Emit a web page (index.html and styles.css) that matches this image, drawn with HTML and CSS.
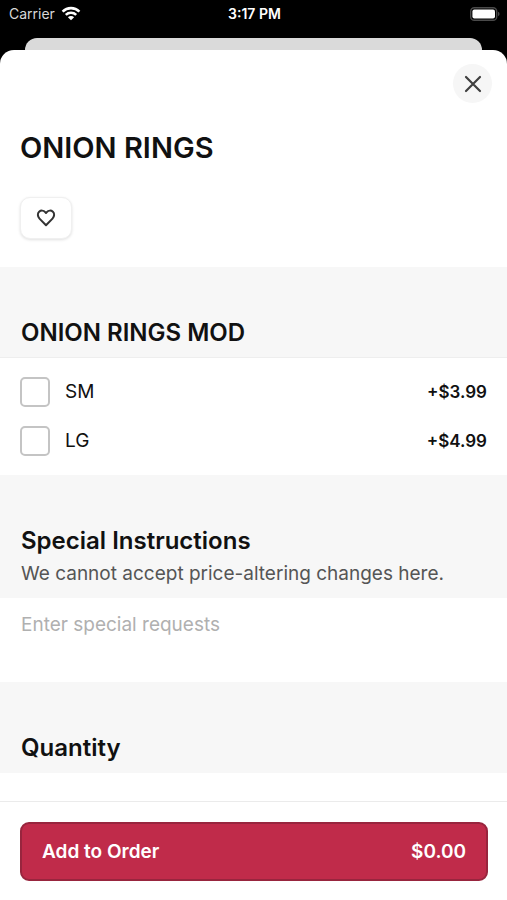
FILE: index.html
```html
<!DOCTYPE html>
<html lang="en">
<head>
<meta charset="utf-8">
<meta name="viewport" content="width=device-width, initial-scale=1">
<title>Onion Rings</title>
<link rel="stylesheet" href="styles.css">
</head>
<body>
<div class="status">
  <div class="carrier">
    <span>Carrier</span>
    <svg width="20" height="16" viewBox="0 0 20 16" fill="none" stroke="#fff" stroke-width="2.6" aria-hidden="true">
      <path d="M1.6 5.6a12 12 0 0 1 16.8 0"/>
      <path d="M4.8 8.9a7.5 7.5 0 0 1 10.4 0"/>
      <path d="M10 14.2 6.9 11.2a4.4 4.4 0 0 1 6.2 0Z" fill="#fff" stroke="none"/>
    </svg>
  </div>
  <time class="clock">3:17 PM</time>
  <svg class="battery" width="30" height="14" viewBox="0 0 30 14" aria-hidden="true">
    <rect x="0.7" y="0.7" width="26" height="12.6" rx="3.6" fill="none" stroke="#4a4a4a" stroke-width="1.4"/>
    <rect x="2.4" y="2.4" width="22.6" height="9.2" rx="2" fill="#fff"/>
    <path d="M28 4.8q1.6.6 1.6 2.2T28 9.2Z" fill="#4a4a4a"/>
  </svg>
</div>
<div class="back-card"></div>
<main class="sheet">
  <div class="toolbar">
    <button class="close" type="button" aria-label="Close">
      <svg width="18" height="18" viewBox="0 0 18 18" fill="none" stroke="#404040" stroke-width="2.2" stroke-linecap="round" aria-hidden="true"><path d="M2 2l14 14M16 2 2 16"/></svg>
    </button>
  </div>
  <header class="item">
    <h1>ONION RINGS</h1>
    <button class="favorite" type="button" aria-label="Add to favorites">
      <svg width="20" height="18" viewBox="0 0 20 18" fill="none" stroke="#333" stroke-width="2" stroke-linejoin="round" aria-hidden="true"><path d="M10 16.2 3.5 9.6C1.4 7.4 1.4 4.2 3.1 2.7 4.9 1.1 7.6 1.3 9.2 3.1L10 4l.8-.9c1.6-1.8 4.3-2 6.1-.4 1.700 1.500 1.700 4.700-.4 6.900Z"/></svg>
    </button>
  </header>
  <section>
    <div class="heading lined"><h2>ONION RINGS MOD</h2></div>
    <div class="options">
      <label class="option"><input type="checkbox" name="size" value="sm"><span>SM</span><span class="price">+$3.99</span></label>
      <label class="option"><input type="checkbox" name="size" value="lg"><span>LG</span><span class="price">+$4.99</span></label>
    </div>
  </section>
  <section>
    <div class="heading">
      <h2><label for="requests">Special Instructions</label></h2>
      <p>We cannot accept price-altering changes here.</p>
    </div>
    <textarea id="requests" placeholder="Enter special requests"></textarea>
  </section>
  <section>
    <div class="heading"><h2>Quantity</h2></div>
  </section>
</main>
<footer class="footer">
  <button class="add" type="button"><span>Add to Order</span><span>$0.00</span></button>
</footer>
</body>
</html>
```
FILE: styles.css
```css
* { box-sizing: border-box; }

body {
  margin: 0;
  min-height: 100vh;
  display: flex;
  flex-direction: column;
  background: #000;
  color: #111;
  font-family: Inter, "Liberation Sans", sans-serif;
}

h1, h2, p { margin: 0; }
h1, h2 { font-weight: 600; }
svg { display: block; }
button, input, textarea { font: inherit; }

.status {
  display: grid;
  grid-template-columns: 1fr auto 1fr;
  align-items: center;
  height: 38px;
  padding: 0 7px 11px 9px;
  color: #fff;
  font-size: 14px;
}
.carrier {
  display: flex;
  align-items: center;
  gap: 6px;
  color: #d8d8d8;
}
.clock { font-weight: 600; }
.battery { justify-self: end; }

.back-card {
  height: 24px;
  margin: 0 25px -12px;
  border-radius: 12px 12px 0 0;
  background: #dadada;
}

.sheet {
  flex: 1;
  border-radius: 14px 14px 0 0;
  background: #fff;
}
.toolbar {
  display: flex;
  justify-content: flex-end;
  padding: 14px 15px 0;
}
.close {
  display: grid;
  place-items: center;
  width: 39px;
  height: 39px;
  padding: 0;
  border: 0;
  border-radius: 50%;
  background: #f6f6f6;
}

.item { padding: 25px 20px 28px; }
h1 {
  font-size: 29px;
  line-height: 40px;
}
.favorite {
  display: grid;
  place-items: center;
  width: 52px;
  height: 42px;
  margin-top: 29px;
  padding: 0;
  border: 1px solid #f0f0f0;
  border-radius: 10px;
  background: #fff;
  box-shadow: 0 1px 3px #00000020;
}

.heading {
  padding: 49px 21px 8px;
  background: #f7f7f7;
}
.lined {
  padding-bottom: 7px;
  border-bottom: 1px solid #eee;
}
h2 {
  font-size: 24px;
  line-height: 34px;
}
.heading p {
  color: #555;
  font-size: 19px;
  line-height: 32px;
}

.options {
  display: grid;
  gap: 19px;
  padding: 19px 20px;
}
.option {
  display: flex;
  align-items: center;
  gap: 15px;
  font-size: 19px;
  line-height: 30px;
}
.option input {
  appearance: none;
  width: 30px;
  height: 30px;
  margin: 0;
  border: 2px solid #c4c4c4;
  border-radius: 5px;
  background: #fff;
}
.option input:checked { background: #c02b4a; }
.price {
  margin-left: auto;
  font-size: 17px;
  font-weight: 600;
}

textarea {
  display: block;
  width: 100%;
  height: 84px;
  padding: 12px 21px;
  border: 0;
  outline: 0;
  resize: none;
  background: #fff;
  color: #111;
  font-size: 19px;
  line-height: 30px;
}
textarea::placeholder { color: #b0b0b0; }

.footer {
  position: sticky;
  bottom: 0;
  padding: 20px 19px 19px 20px;
  border-top: 1px solid #ebebeb;
  background: #fff;
}
.add {
  display: flex;
  justify-content: space-between;
  align-items: center;
  width: 100%;
  height: 59px;
  padding: 0 20px;
  border: 2px solid #98253e;
  border-radius: 9px;
  background: #c02b4a;
  color: #fff;
  font-size: 19px;
  font-weight: 600;
}
```
